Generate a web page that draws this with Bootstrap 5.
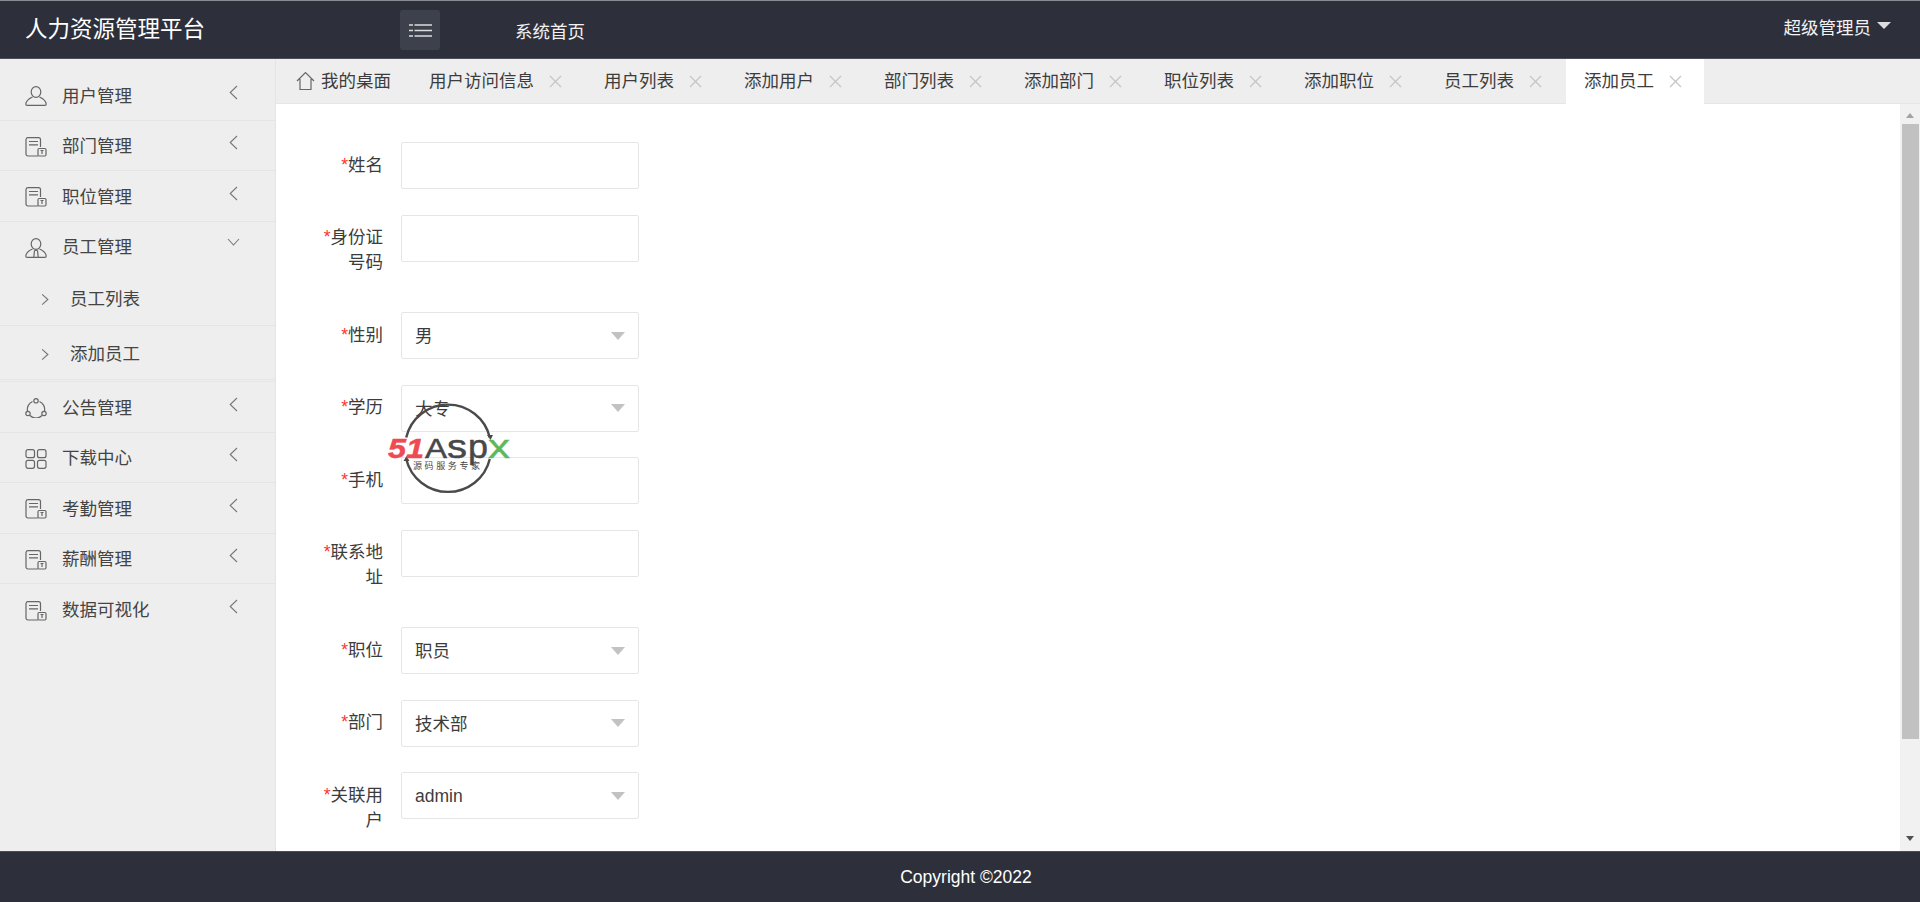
<!DOCTYPE html>
<html lang="zh-CN">
<head>
<meta charset="utf-8">
<title>人力资源管理平台</title>
<link href="https://cdn.jsdelivr.net/npm/bootstrap@5.3.0/dist/css/bootstrap.min.css" rel="stylesheet">
<style>
html,body{height:100%}
body{font-family:"Liberation Sans","Noto Sans CJK SC",sans-serif;font-size:17.5px;line-height:25px;color:#3c3c3c;background:#fff;position:relative;overflow:hidden}
.top-bar{height:59px;flex:none;background:#2d303b;border-top:1px solid #8a8c93;border-bottom:1px solid #4a4d57;color:#fff;padding:0;flex-wrap:nowrap;justify-content:flex-start;align-items:flex-start}
.brand-name{font-size:22.5px;line-height:30px;color:#fff;margin:14px 0 0 25px;padding:0;width:375px}
.menu-toggle{width:40px;height:40px;margin-top:9px;background:#3d414c;border:0;border-radius:3px;padding:0;display:flex;align-items:center;justify-content:center}
.home-link{color:#f2f2f2;margin:19px 0 0 75px;text-decoration:none}
.user-menu{margin:15px 29px 0 auto;color:#f2f2f2;display:flex;align-items:center}
.user-caret{width:0;height:0;border-left:7.5px solid transparent;border-right:7.5px solid transparent;border-top:7px solid #ddd;margin:-7px 0 0 6px}
.side-rail{width:276px;flex:none;background:#eee;border-right:1px solid #e4e4e4;padding-top:11px}
.side-rail .list-group-item{background:transparent;border:0;border-bottom:1px solid #e4e4e4;border-radius:0;color:#444;display:flex;align-items:center}
.side-row{height:50.5px;padding:3px 0 0 25px}
.side-row svg.ico{width:22px;height:20px;margin-right:15px;flex:none}
.side-open{border-bottom:0!important;padding-top:2px}
.side-chev{margin-left:auto;margin-right:37px;margin-top:-8px;width:9px;height:15px}
.side-chev-down{margin-right:35px;margin-top:-12px;width:13px;height:8px}
.sub-row{height:54px;padding:2px 0 0 41px}
.sub-row svg{width:8px;height:13px;margin-right:21px}
.sub-row-last{height:56px;padding-top:3px;border-bottom:3px double #e6e6e6!important}
.tab-strip{height:45px;flex:none;background:#eee;border-bottom:1px solid #e6e6e6;flex-wrap:nowrap}
.tab-entry{display:flex;align-items:center;height:44px;padding:0 22px 0 18px;margin-right:2px;color:#3c3c3c;text-decoration:none}
.tab-entry svg.tab-x{width:13px;height:13px;margin-left:15px}
.tab-home{padding:0 20px 0 20px;margin-right:0}
.tab-home svg{width:19px;height:20px;margin-right:6px}
.tab-now{background:#fff;height:45px;margin-bottom:-1px}
.form-pane{flex:1;min-width:0;overflow:hidden;padding:38px 0 0 19px;background:#fff}
.field-row{display:flex;margin-bottom:25px;align-items:flex-start}
.field-name{width:106px;flex:none;padding:10.75px 18px 11.75px;margin:0;text-align:right;line-height:25px}
.field-name i{color:#f33;font-style:normal}
.field-row .form-control,.field-row .form-select{width:238px;height:47px;margin-bottom:.5px;border:1px solid #e6e6e6;border-radius:2px;font-size:17.5px;color:#3c3c3c;padding:2px 13px 0;box-shadow:none;line-height:25px}
.field-row .form-select{background-image:url("data:image/svg+xml,%3Csvg xmlns='http://www.w3.org/2000/svg' width='14' height='8'%3E%3Cpath d='M0 0h14L7 8z' fill='%23c2c2c2'/%3E%3C/svg%3E");background-size:14px 8px;background-position:right 13px center}
.fake-scroll{width:20px;flex:none;background:#f1f1f1;display:flex;flex-direction:column;align-items:center}
.scroll-up{width:0;height:0;border:4.5px solid transparent;border-top:0;border-bottom:5px solid #a3a3a3;margin:9px 0 6px}
.scroll-thumb{width:17px;height:615px;background:#c1c1c1}
.scroll-down{width:0;height:0;border:4.5px solid transparent;border-bottom:0;border-top:5px solid #505050;margin-top:auto;margin-bottom:10px}
.page-foot{height:51px;flex:none;background:#2d303b;border-top:1px solid #4a4d57;color:#fff;text-align:center;line-height:50px;padding-left:12px}
.stamp{position:absolute;left:384px;top:402px;width:130px;height:95px;pointer-events:none}
</style>
</head>
<body class="d-flex flex-column">
<svg width="0" height="0" class="position-absolute">
  <symbol id="i-user" viewBox="0 0 22 20"><g fill="none" stroke="#666" stroke-width="1.2"><ellipse cx="11" cy="6" rx="4.8" ry="5.4"/><path d="M7.5 11C4 12.5 1 15 .8 18.2c0 .8.5 1.2 1.2 1.2h18c.7 0 1.2-.4 1.2-1.2C21 15 18 12.500 14.500 11"/></g></symbol>
  <symbol id="i-staff" viewBox="0 0 22 20"><g fill="none" stroke="#666" stroke-width="1.2"><ellipse cx="11" cy="6" rx="4.800" ry="5.400"/><path d="M7.500 11C4 12.500 1 15 .8 18.200c0 .8.5 1.200 1.200 1.200h18c.7 0 1.200-.4 1.200-1.200C21 15 18 12.500 14.500 11"/><path d="M9.500 12.500 8.800 19M12.500 12.500l.7 6.500M9.500 12.500h3"/></g></symbol>
  <symbol id="i-doc" viewBox="0 0 22 20"><g fill="none" stroke="#666" stroke-width="1.2"><path d="M13 19H3a2 2 0 0 1-2-2V2.500A2 2 0 0 1 3 .7h10.500a2 2 0 0 1 2 2V10"/><path d="M4 4.500h9M4 7.800h9"/><rect x="13" y="11.500" width="8" height="7.500" rx="1.200"/><path d="M17 13.500v3.500M15.500 13.500h3"/></g></symbol>
  <symbol id="i-ring" viewBox="0 0 22 20"><g fill="none" stroke="#666" stroke-width="1.2"><path d="M7.500 3.500A8.500 8.500 0 0 0 2.500 13M14.500 3.500A8.500 8.500 0 0 1 19.500 13M5 17.500a8.500 8.500 0 0 0 12 0"/><circle cx="11" cy="2.800" r="2.200"/><circle cx="3" cy="15.500" r="2.200"/><circle cx="19" cy="15.500" r="2.200"/></g></symbol>
  <symbol id="i-grid" viewBox="0 0 22 20"><g fill="none" stroke="#666" stroke-width="1.2"><rect x="1" y=".7" width="8.500" height="8" rx="2"/><rect x="12.500" y=".7" width="8.500" height="8" rx="2"/><rect x="1" y="11.300" width="8.500" height="8" rx="2"/><rect x="12.500" y="11.300" width="8.500" height="8" rx="2"/></g></symbol>
  <symbol id="i-left" viewBox="0 0 9 15"><path d="M8 1 1.200 7.500 8 14" fill="none" stroke="#777" stroke-width="1.100"/></symbol>
  <symbol id="i-x" viewBox="0 0 13 13"><path d="M1 1l11 11M12 1 1 12" fill="none" stroke="#c6c6c6" stroke-width="1.300"/></symbol>
</svg>

<header class="navbar top-bar">
  <a class="navbar-brand brand-name" href="#">人力资源管理平台</a>
  <button class="btn menu-toggle" type="button" aria-label="菜单">
    <svg width="23" height="13" viewBox="0 0 23 13"><g stroke="#dcdcdc" stroke-width="1.600"><path d="M0 1h4M5.500 1H23M0 6.500h4M5.500 6.500H23M0 12h4M5.500 12H23"/></g></svg>
  </button>
  <a class="home-link" href="#">系统首页</a>
  <div class="user-menu"><span>超级管理员</span><span class="user-caret"></span></div>
</header>

<div class="d-flex flex-grow-1" style="min-height:0">
  <aside class="side-rail">
    <div class="list-group list-group-flush">
      <a class="list-group-item side-row" href="#"><svg class="ico"><use href="#i-user"/></svg>用户管理<svg class="side-chev"><use href="#i-left"/></svg></a>
      <a class="list-group-item side-row" href="#"><svg class="ico"><use href="#i-doc"/></svg>部门管理<svg class="side-chev"><use href="#i-left"/></svg></a>
      <a class="list-group-item side-row" href="#"><svg class="ico"><use href="#i-doc"/></svg>职位管理<svg class="side-chev"><use href="#i-left"/></svg></a>
      <a class="list-group-item side-row side-open" href="#"><svg class="ico"><use href="#i-staff"/></svg>员工管理<svg class="side-chev side-chev-down" viewBox="0 0 13 8"><path d="M1 1l5.500 6L12 1" fill="none" stroke="#777" stroke-width="1.100"/></svg></a>
      <a class="list-group-item sub-row" href="#"><svg viewBox="0 0 7 11"><path d="M1 1l5 4.500L1 10" fill="none" stroke="#777"/></svg>员工列表</a>
      <a class="list-group-item sub-row sub-row-last" href="#"><svg viewBox="0 0 7 11"><path d="M1 1l5 4.500L1 10" fill="none" stroke="#777"/></svg>添加员工</a>
      <a class="list-group-item side-row" href="#"><svg class="ico"><use href="#i-ring"/></svg>公告管理<svg class="side-chev"><use href="#i-left"/></svg></a>
      <a class="list-group-item side-row" href="#"><svg class="ico"><use href="#i-grid"/></svg>下载中心<svg class="side-chev"><use href="#i-left"/></svg></a>
      <a class="list-group-item side-row" href="#"><svg class="ico"><use href="#i-doc"/></svg>考勤管理<svg class="side-chev"><use href="#i-left"/></svg></a>
      <a class="list-group-item side-row" href="#"><svg class="ico"><use href="#i-doc"/></svg>薪酬管理<svg class="side-chev"><use href="#i-left"/></svg></a>
      <a class="list-group-item side-row" href="#"><svg class="ico"><use href="#i-doc"/></svg>数据可视化<svg class="side-chev"><use href="#i-left"/></svg></a>
    </div>
  </aside>

  <main class="d-flex flex-column flex-grow-1" style="min-width:0">
    <nav class="nav tab-strip">
      <a class="tab-entry tab-home" href="#"><svg viewBox="0 0 19 20"><path d="M1 10 9.500 1.500 18 10M4 8v10.500h11V8" fill="none" stroke="#666" stroke-width="1.200"/></svg>我的桌面</a>
      <a class="tab-entry" href="#">用户访问信息<svg class="tab-x"><use href="#i-x"/></svg></a>
      <a class="tab-entry" href="#">用户列表<svg class="tab-x"><use href="#i-x"/></svg></a>
      <a class="tab-entry" href="#">添加用户<svg class="tab-x"><use href="#i-x"/></svg></a>
      <a class="tab-entry" href="#">部门列表<svg class="tab-x"><use href="#i-x"/></svg></a>
      <a class="tab-entry" href="#">添加部门<svg class="tab-x"><use href="#i-x"/></svg></a>
      <a class="tab-entry" href="#">职位列表<svg class="tab-x"><use href="#i-x"/></svg></a>
      <a class="tab-entry" href="#">添加职位<svg class="tab-x"><use href="#i-x"/></svg></a>
      <a class="tab-entry" href="#">员工列表<svg class="tab-x"><use href="#i-x"/></svg></a>
      <a class="tab-entry tab-now" href="#">添加员工<svg class="tab-x"><use href="#i-x"/></svg></a>
    </nav>
    <div class="d-flex flex-grow-1" style="min-height:0">
      <form class="form-pane">
        <div class="field-row"><label class="field-name"><i>*</i>姓名</label><input class="form-control" type="text"></div>
        <div class="field-row"><label class="field-name"><i>*</i>身份证号码</label><input class="form-control" type="text"></div>
        <div class="field-row"><label class="field-name"><i>*</i>性别</label><select class="form-select"><option>男</option></select></div>
        <div class="field-row"><label class="field-name"><i>*</i>学历</label><select class="form-select"><option>大专</option></select></div>
        <div class="field-row"><label class="field-name"><i>*</i>手机</label><input class="form-control" type="text"></div>
        <div class="field-row"><label class="field-name"><i>*</i>联系地址</label><input class="form-control" type="text"></div>
        <div class="field-row"><label class="field-name"><i>*</i>职位</label><select class="form-select"><option>职员</option></select></div>
        <div class="field-row"><label class="field-name"><i>*</i>部门</label><select class="form-select"><option>技术部</option></select></div>
        <div class="field-row"><label class="field-name"><i>*</i>关联用户</label><select class="form-select"><option>admin</option></select></div>
      </form>
      <div class="fake-scroll" aria-hidden="true"><span class="scroll-up"></span><span class="scroll-thumb"></span><span class="scroll-down"></span></div>
    </div>
  </main>
</div>

<footer class="page-foot">Copyright ©2022</footer>

<svg class="stamp" viewBox="0 0 130 95" aria-label="51Aspx 源码服务专家">
  <g fill="none" stroke="#4a4a4a" stroke-width="2.400">
    <path d="M22.200 35.500A43 43 0 0 1 105.800 35.500"/>
    <path d="M22.200 57A43 43 0 0 0 105.800 57"/>
  </g>
  <path d="M103 33h6l-2.500 5zM19.500 59h6l-3-5z" fill="#4a4a4a"/>
  <g font-family="'Liberation Sans',sans-serif">
    <text x="4" y="56" font-size="28" font-weight="700" font-style="italic" fill="#ef4a52" stroke="#ef4a52" stroke-width=".5" textLength="36" lengthAdjust="spacingAndGlyphs">51</text>
    <g fill="#484848" stroke="#484848" stroke-width=".5">
      <text x="41" y="56" font-size="28" textLength="22" lengthAdjust="spacingAndGlyphs">A</text>
      <text x="63" y="56" font-size="34" textLength="20" lengthAdjust="spacingAndGlyphs">s</text>
      <text x="84" y="56" font-size="34" textLength="20" lengthAdjust="spacingAndGlyphs">p</text>
    </g>
    <text x="104" y="56" font-size="34" fill="#5cb85c" stroke="#5cb85c" stroke-width=".4" textLength="22" lengthAdjust="spacingAndGlyphs">x</text>
  </g>
  <text x="29" y="67" font-family="'Noto Sans CJK SC',sans-serif" font-size="9" fill="#444" textLength="67">源码服务专家</text>
</svg>
<script src="https://cdn.jsdelivr.net/npm/bootstrap@5.3.0/dist/js/bootstrap.bundle.min.js"></script>
</body>
</html>
